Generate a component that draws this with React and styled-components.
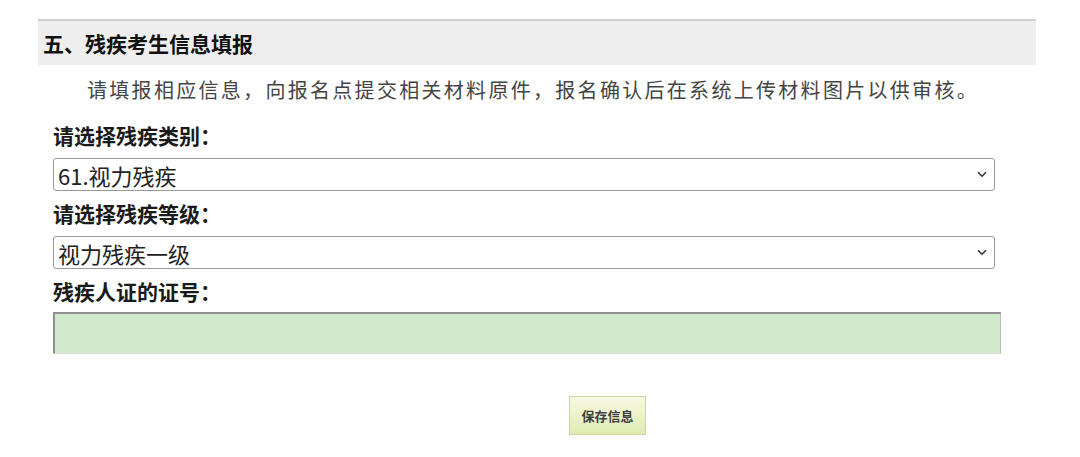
import React from 'react';
import styled, { createGlobalStyle } from 'styled-components';

const GlobalStyle = createGlobalStyle`
  html, body {
    margin: 0;
    padding: 0;
    background: #fff;
  }
  body {
    font-family: "Noto Sans CJK SC", "Noto Sans", sans-serif;
    color: #222;
  }
`;

const Page = styled.div`
  width: 998px;
  padding: 19px 0 0 38px;
`;

const SectionHeader = styled.h2`
  margin: 0;
  height: 44px;
  display: flex;
  align-items: center;
  padding-left: 5px;
  border-top: 2px solid #cfcfcf;
  background: #eeeeee;
  font-size: 21px;
  font-weight: 700;
  color: #111;
`;

const Intro = styled.p`
  margin: 10px 0 0;
  line-height: 30px;
  text-indent: 49px;
  font-size: 20px;
  letter-spacing: 2.3px;
  color: #444;
`;

const Form = styled.form`
  padding: 15px 0 0 15px;
  display: flex;
  flex-direction: column;
`;

const Label = styled.label`
  display: block;
  line-height: 30px;
  font-size: 21px;
  font-weight: 700;
  color: #1a1a1a;
  margin-top: ${p => p.$first ? '0' : '7px'};
  margin-bottom: ${p => p.$tight ? '6px' : '8px'};
`;

const SelectWrap = styled.div`
  position: relative;
  width: 942px;
`;

const Select = styled.select`
  appearance: none;
  -webkit-appearance: none;
  width: 100%;
  height: 33px;
  padding: 0 30px 2px 4px;
  border: 1px solid #9a9a9a;
  border-radius: 3px;
  background: #fff;
  font-family: "Noto Sans CJK SC", "Noto Sans", sans-serif;
  font-size: 22px;
  color: #222;
  outline: none;
`;

const Chevron = styled.svg`
  position: absolute;
  right: 8px;
  top: 13px;
  width: 10px;
  height: 7px;
  pointer-events: none;
`;

const NumberInput = styled.input`
  box-sizing: border-box;
  width: 948px;
  height: 42px;
  margin: 0;
  border-style: solid;
  border-width: 2px 1px 1px 2px;
  border-color: #8f8f8f #bdbdbd #d6d6d6 #8f8f8f;
  background: #d1eacb;
  font-size: 19px;
  outline: none;
`;

const ButtonRow = styled.div`
  padding: 42px 0 0 516px;
`;

const SaveButton = styled.button`
  width: 77px;
  height: 39px;
  border: 1px solid #c9d79a;
  background: linear-gradient(#f7f9e2, #e0ebb4);
  font-family: "Noto Sans CJK SC", "Noto Sans", sans-serif;
  font-size: 13px;
  font-weight: 700;
  color: #3f3f3f;
  cursor: pointer;
`;

function Dropdown({ value, options }) {
  return (
    <SelectWrap>
      <Select defaultValue={value}>
        {options.map(o => <option key={o}>{o}</option>)}
      </Select>
      <Chevron viewBox="0 0 10 7">
        <path d="M1 1.2 L5 5.2 L9 1.2" fill="none" stroke="#333" strokeWidth="1.6" />
      </Chevron>
    </SelectWrap>
  );
}

export default function App() {
  return (
    <Page>
      <GlobalStyle />
      <SectionHeader>五、残疾考生信息填报</SectionHeader>
      <Intro>请填报相应信息，向报名点提交相关材料原件，报名确认后在系统上传材料图片以供审核。</Intro>
      <Form onSubmit={e => e.preventDefault()}>
        <Label $first>请选择残疾类别：</Label>
        <Dropdown value="61.视力残疾" options={['61.视力残疾', '62.听力残疾', '63.言语残疾', '64.肢体残疾']} />
        <Label>请选择残疾等级：</Label>
        <Dropdown value="视力残疾一级" options={['视力残疾一级', '视力残疾二级', '视力残疾三级', '视力残疾四级']} />
        <Label $tight>残疾人证的证号：</Label>
        <NumberInput type="text" />
        <ButtonRow>
          <SaveButton type="submit">保存信息</SaveButton>
        </ButtonRow>
      </Form>
    </Page>
  );
}
